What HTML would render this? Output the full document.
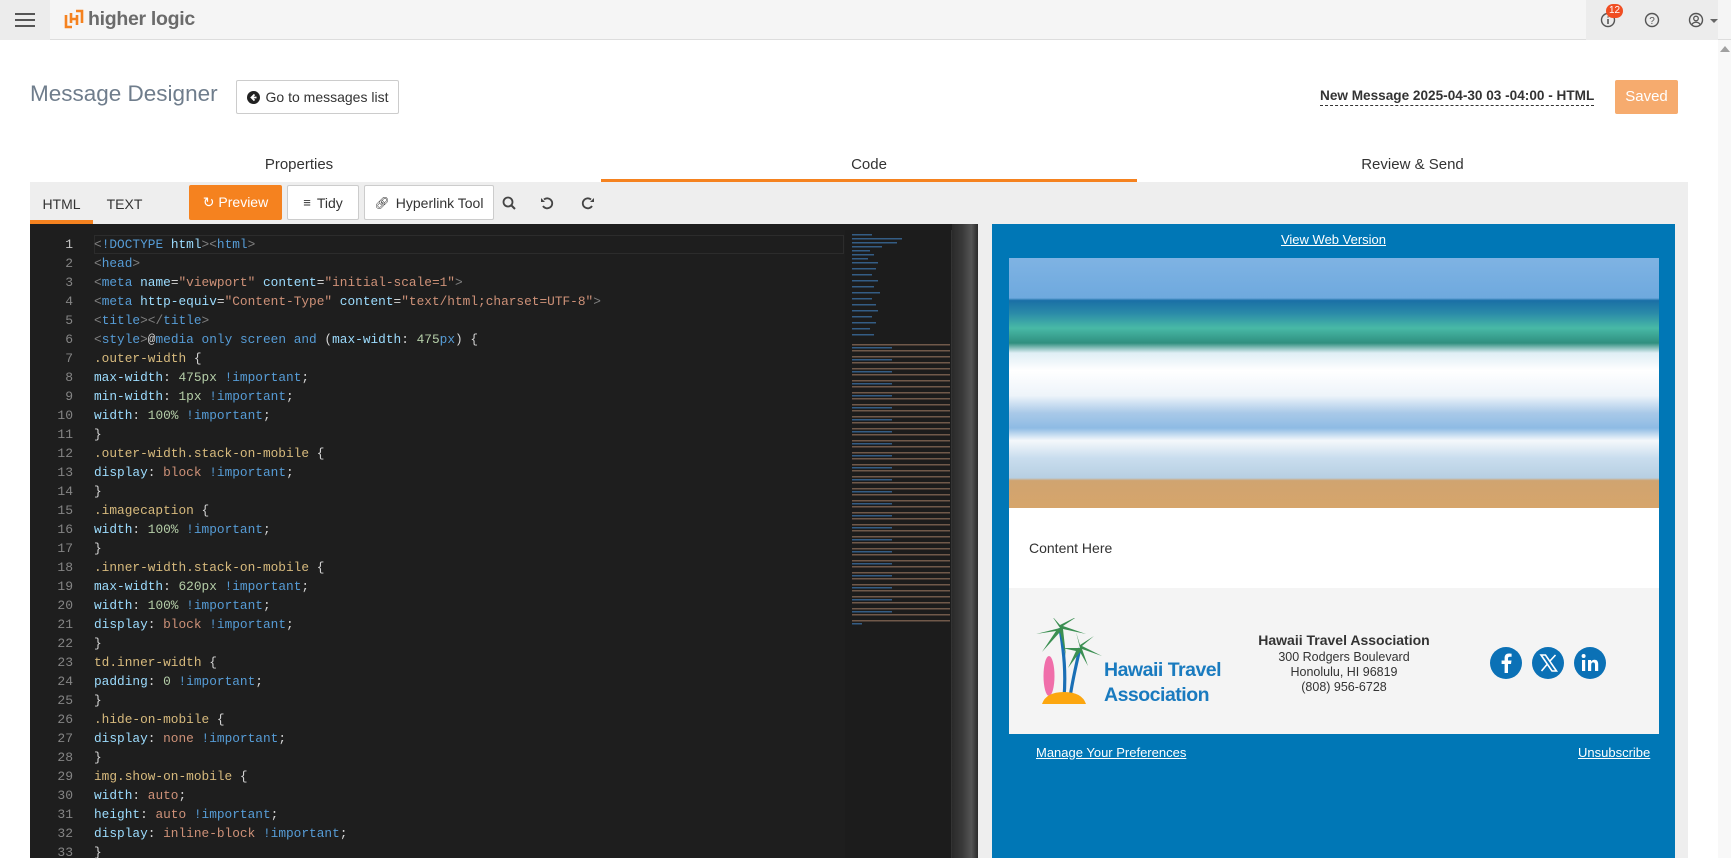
<!DOCTYPE html>
<html><head><meta charset="utf-8">
<style>
*{box-sizing:border-box;margin:0;padding:0}
body{width:1731px;height:858px;overflow:hidden;background:#fff;font-family:"Liberation Sans",sans-serif;position:relative;color:#333}
.abs{position:absolute}
.top{left:0;top:0;width:1731px;height:40px;background:#f5f5f5;border-bottom:1px solid #ddd}
.btn{position:absolute;border:1px solid #ccc;background:#fff;font-size:14px;color:#333;display:flex;align-items:center;justify-content:center;gap:6px;border-radius:2px}
.code{position:absolute;left:94px;top:235px;font-family:"Liberation Mono",monospace;font-size:12.8px;line-height:19px;color:#d4d4d4;white-space:pre}
.nums{position:absolute;left:30px;width:43px;top:235px;font-family:"Liberation Mono",monospace;font-size:13px;line-height:19px;color:#858585;text-align:right;white-space:pre}
.b{color:#808080}.t{color:#569cd6}.a{color:#9cdcfe}.s{color:#ce9178}.n{color:#b5cea8}.sel{color:#d7ba7d}.w{color:#d4d4d4}
.lnk{color:#fff;text-decoration:underline;font-size:13px;position:absolute}
</style></head><body>
<div class="abs top"></div>
<div class="abs" style="left:0;top:0;width:50px;height:40px;background:#ececec"></div>
<div class="abs" style="left:15px;top:13px;width:20px;height:2px;background:#555;box-shadow:0 6px 0 #555,0 12px 0 #555"></div>
<svg class="abs" style="left:64px;top:9px" width="20" height="20" viewBox="0 0 20 20"><path d="M2 6v12h6M18 14V2h-6M7 4v10M13 6v10M7 10h6" stroke="#f5821f" stroke-width="2.6" fill="none"/></svg>
<div class="abs" style="left:88px;top:8px;font-size:19.5px;font-weight:bold;color:#6b6b6b;letter-spacing:-0.3px">higher logic</div>
<div class="abs" style="left:1586px;top:0;width:132px;height:40px;background:#ececec"></div>
<svg class="abs" style="left:1600px;top:12px" width="16" height="16"><circle cx="8" cy="8" r="6.5" stroke="#555" stroke-width="1.4" fill="none"/><path d="M8 7v5M8 4.5v1" stroke="#555" stroke-width="1.6"/></svg>
<div class="abs" style="left:1606px;top:4px;width:17px;height:14px;border-radius:7px;background:#f04e23;color:#fff;font-size:10px;text-align:center;line-height:14px">12</div>
<svg class="abs" style="left:1644px;top:12px" width="16" height="16"><circle cx="8" cy="8" r="6.5" stroke="#555" stroke-width="1.4" fill="none"/><text x="8" y="12" font-size="10" text-anchor="middle" fill="#555" font-family="Liberation Sans">?</text></svg>
<svg class="abs" style="left:1688px;top:12px" width="16" height="16"><circle cx="8" cy="8" r="6.5" stroke="#555" stroke-width="1.4" fill="none"/><circle cx="8" cy="6.5" r="2.3" stroke="#555" stroke-width="1.3" fill="none"/><path d="M3.8 12.5c2-3 6.4-3 8.4 0" stroke="#555" stroke-width="1.3" fill="none"/></svg>
<div class="abs" style="left:1710px;top:19px;border:4px solid transparent;border-top:4px solid #666"></div>
<div class="abs" style="left:1718px;top:40px;width:13px;height:818px;background:#f8f8f8"></div>
<div class="abs" style="left:1720px;top:46px;border:5px solid transparent;border-bottom:6px solid #a0a0a0;border-top:0"></div>

<div class="abs" style="left:30px;top:81px;font-size:22.5px;color:#6f7d8c;font-weight:300">Message Designer</div>
<div class="btn" style="left:236px;top:80px;width:163px;height:34px"><svg width="13" height="13"><circle cx="6.5" cy="6.5" r="6.5" fill="#222"/><path d="M7.5 3.5L4.5 6.5L7.5 9.5M4.5 6.5h5" stroke="#fff" stroke-width="1.8" fill="none"/></svg>Go to messages list</div>
<div class="abs" style="left:1320px;top:88px;font-size:13.6px;font-weight:bold;color:#333;border-bottom:1px dashed #333;padding-bottom:2px">New Message 2025-04-30 03 -04:00 - HTML</div>
<div class="abs" style="left:1615px;top:80px;width:63px;height:34px;background:#f6ab6e;border-radius:2px;color:#fff;font-size:15px;text-align:center;line-height:34px">Saved</div>

<div class="abs" style="left:30px;top:156px;width:538px;text-align:center;font-size:15px;color:#333">Properties</div>
<div class="abs" style="left:601px;top:156px;width:536px;text-align:center;font-size:15px;color:#333">Code</div>
<div class="abs" style="left:1137px;top:156px;width:551px;text-align:center;font-size:15px;color:#333">Review &amp; Send</div>
<div class="abs" style="left:601px;top:179px;width:536px;height:3px;background:#f5821f"></div>

<div class="abs" style="left:30px;top:182px;width:1658px;height:676px;background:#eeeeee"></div>
<div class="abs" style="left:30px;top:196px;width:63px;text-align:center;font-size:14px;color:#333">HTML</div>
<div class="abs" style="left:30px;top:220px;width:63px;height:4px;background:#f5821f"></div>
<div class="abs" style="left:93px;top:196px;width:63px;text-align:center;font-size:14px;color:#333">TEXT</div>
<div class="btn" style="left:189px;top:185px;width:93px;height:35px;background:#f5821f;border-color:#f5821f;color:#fff">&#x21bb; Preview</div>
<div class="btn" style="left:287px;top:185px;width:72px;height:35px"><span style="font-size:13px">&#x2261;</span> Tidy</div>
<div class="btn" style="left:364px;top:185px;width:130px;height:35px"><span style="font-size:12px">&#x1F517;&#xFE0E;</span>Hyperlink Tool</div>
<svg class="abs" style="left:502px;top:196px" width="14" height="14"><circle cx="6" cy="6" r="4.5" stroke="#444" stroke-width="1.8" fill="none"/><path d="M9.5 9.5L13 13" stroke="#444" stroke-width="2"/></svg>
<svg class="abs" style="left:540px;top:196px" width="14" height="14"><path d="M4 3.5A5 5 0 1 1 3 10" stroke="#444" stroke-width="1.8" fill="none"/><path d="M1 2v4h4z" fill="#444"/></svg>
<svg class="abs" style="left:581px;top:196px" width="14" height="14"><path d="M10 3.5A5 5 0 1 0 11 10" stroke="#444" stroke-width="1.8" fill="none"/><path d="M13 2v4H9z" fill="#444"/></svg>

<div class="abs" style="left:30px;top:224px;width:948px;height:634px;background:#1e1e1e"></div>
<div class="abs" style="left:94px;top:235px;width:750px;height:19px;border:1px solid #2c2c2c"></div>
<div class="abs" style="left:845px;top:230px;width:107px;height:628px;background:#1c1c1c;border-right:1px solid #333"></div>
<div class="abs" style="left:952px;top:224px;width:26px;height:634px;background:linear-gradient(90deg,#2a2a2a,#3a3a3a 40%,#555 75%,#2a2a2a)"></div>
<svg class="abs" style="left:850px;top:232px" width="100" height="450">
<g fill="#3a6ea0" opacity=".8">
<rect x="2" y="2" width="20" height="1.5"/><rect x="2" y="6" width="50" height="1.5"/><rect x="2" y="10" width="45" height="1.5"/><rect x="2" y="14" width="30" height="1.5"/>
<rect x="2" y="18" width="18" height="1.5"/><rect x="2" y="22" width="22" height="1.5"/><rect x="2" y="26" width="16" height="1.5"/><rect x="2" y="30" width="26" height="1.5"/>
<rect x="2" y="36" width="24" height="1.5"/><rect x="2" y="42" width="20" height="1.5"/><rect x="2" y="48" width="26" height="1.5"/><rect x="2" y="54" width="22" height="1.5"/>
<rect x="2" y="60" width="28" height="1.5"/><rect x="2" y="66" width="20" height="1.5"/><rect x="2" y="72" width="24" height="1.5"/><rect x="2" y="78" width="26" height="1.5"/>
<rect x="2" y="84" width="20" height="1.5"/><rect x="2" y="90" width="24" height="1.5"/><rect x="2" y="96" width="18" height="1.5"/><rect x="2" y="102" width="22" height="1.5"/>
</g>
<g fill="#7a6050" opacity=".9">
<rect x="2" y="112" width="98" height="1.5"/><rect x="2" y="118" width="98" height="1.5"/><rect x="2" y="124" width="98" height="1.5"/><rect x="2" y="130" width="98" height="1.5"/><rect x="2" y="136" width="98" height="1.5"/><rect x="2" y="142" width="98" height="1.5"/><rect x="2" y="148" width="98" height="1.5"/><rect x="2" y="154" width="98" height="1.5"/><rect x="2" y="160" width="98" height="1.5"/><rect x="2" y="166" width="98" height="1.5"/><rect x="2" y="172" width="98" height="1.5"/><rect x="2" y="178" width="98" height="1.5"/><rect x="2" y="184" width="98" height="1.5"/><rect x="2" y="190" width="98" height="1.5"/><rect x="2" y="196" width="98" height="1.5"/><rect x="2" y="202" width="98" height="1.5"/><rect x="2" y="208" width="98" height="1.5"/><rect x="2" y="214" width="98" height="1.5"/><rect x="2" y="220" width="98" height="1.5"/><rect x="2" y="226" width="98" height="1.5"/><rect x="2" y="232" width="98" height="1.5"/><rect x="2" y="238" width="98" height="1.5"/><rect x="2" y="244" width="98" height="1.5"/><rect x="2" y="250" width="98" height="1.5"/><rect x="2" y="256" width="98" height="1.5"/><rect x="2" y="262" width="98" height="1.5"/><rect x="2" y="268" width="98" height="1.5"/><rect x="2" y="274" width="98" height="1.5"/><rect x="2" y="280" width="98" height="1.5"/><rect x="2" y="286" width="98" height="1.5"/><rect x="2" y="292" width="98" height="1.5"/><rect x="2" y="298" width="98" height="1.5"/><rect x="2" y="304" width="98" height="1.5"/><rect x="2" y="310" width="98" height="1.5"/><rect x="2" y="316" width="98" height="1.5"/><rect x="2" y="322" width="98" height="1.5"/><rect x="2" y="328" width="98" height="1.5"/><rect x="2" y="334" width="98" height="1.5"/><rect x="2" y="340" width="98" height="1.5"/><rect x="2" y="346" width="98" height="1.5"/><rect x="2" y="352" width="98" height="1.5"/><rect x="2" y="358" width="98" height="1.5"/><rect x="2" y="364" width="98" height="1.5"/><rect x="2" y="370" width="98" height="1.5"/><rect x="2" y="376" width="98" height="1.5"/><rect x="2" y="382" width="98" height="1.5"/><rect x="2" y="388" width="98" height="1.5"/>
</g>
<g fill="#3a6ea0" opacity=".8">
<rect x="2" y="115" width="40" height="1.5"/><rect x="2" y="127" width="40" height="1.5"/><rect x="2" y="139" width="40" height="1.5"/><rect x="2" y="151" width="40" height="1.5"/><rect x="2" y="163" width="40" height="1.5"/><rect x="2" y="175" width="40" height="1.5"/><rect x="2" y="187" width="40" height="1.5"/><rect x="2" y="199" width="40" height="1.5"/><rect x="2" y="211" width="40" height="1.5"/><rect x="2" y="223" width="40" height="1.5"/><rect x="2" y="235" width="40" height="1.5"/><rect x="2" y="247" width="40" height="1.5"/><rect x="2" y="259" width="40" height="1.5"/><rect x="2" y="271" width="40" height="1.5"/><rect x="2" y="283" width="40" height="1.5"/><rect x="2" y="295" width="40" height="1.5"/><rect x="2" y="307" width="40" height="1.5"/><rect x="2" y="319" width="40" height="1.5"/><rect x="2" y="331" width="40" height="1.5"/><rect x="2" y="343" width="40" height="1.5"/><rect x="2" y="355" width="40" height="1.5"/><rect x="2" y="367" width="40" height="1.5"/><rect x="2" y="379" width="40" height="1.5"/><rect x="2" y="391" width="10" height="1.5"/>
</g></svg>

<div class="nums"><span style="color:#c6c6c6">1</span>
2
3
4
5
6
7
8
9
10
11
12
13
14
15
16
17
18
19
20
21
22
23
24
25
26
27
28
29
30
31
32
33</div>
<div class="code"><span class="b">&lt;</span><span class="t">!DOCTYPE</span> <span class="a">html</span><span class="b">&gt;&lt;</span><span class="t">html</span><span class="b">&gt;</span>
<span class="b">&lt;</span><span class="t">head</span><span class="b">&gt;</span>
<span class="b">&lt;</span><span class="t">meta</span> <span class="a">name</span>=<span class="s">"viewport"</span> <span class="a">content</span>=<span class="s">"initial-scale=1"</span><span class="b">&gt;</span>
<span class="b">&lt;</span><span class="t">meta</span> <span class="a">http-equiv</span>=<span class="s">"Content-Type"</span> <span class="a">content</span>=<span class="s">"text/html;charset=UTF-8"</span><span class="b">&gt;</span>
<span class="b">&lt;</span><span class="t">title</span><span class="b">&gt;&lt;/</span><span class="t">title</span><span class="b">&gt;</span>
<span class="b">&lt;</span><span class="t">style</span><span class="b">&gt;</span><span class="w">@</span><span class="t">media only screen and</span> (<span class="a">max-width</span>: <span class="n">475</span><span class="t">px</span>) {
<span class="sel">.outer-width</span> {
<span class="a">max-width</span>: <span class="n">475px</span> <span class="t">!important</span>;
<span class="a">min-width</span>: <span class="n">1px</span> <span class="t">!important</span>;
<span class="a">width</span>: <span class="n">100%</span> <span class="t">!important</span>;
}
<span class="sel">.outer-width.stack-on-mobile</span> {
<span class="a">display</span>: <span class="s">block</span> <span class="t">!important</span>;
}
<span class="sel">.imagecaption</span> {
<span class="a">width</span>: <span class="n">100%</span> <span class="t">!important</span>;
}
<span class="sel">.inner-width.stack-on-mobile</span> {
<span class="a">max-width</span>: <span class="n">620px</span> <span class="t">!important</span>;
<span class="a">width</span>: <span class="n">100%</span> <span class="t">!important</span>;
<span class="a">display</span>: <span class="s">block</span> <span class="t">!important</span>;
}
<span class="sel">td.inner-width</span> {
<span class="a">padding</span>: <span class="n">0</span> <span class="t">!important</span>;
}
<span class="sel">.hide-on-mobile</span> {
<span class="a">display</span>: <span class="s">none</span> <span class="t">!important</span>;
}
<span class="sel">img.show-on-mobile</span> {
<span class="a">width</span>: <span class="s">auto</span>;
<span class="a">height</span>: <span class="s">auto</span> <span class="t">!important</span>;
<span class="a">display</span>: <span class="s">inline-block</span> <span class="t">!important</span>;
}</div>

<div class="abs" style="left:992px;top:224px;width:683px;height:634px;background:#0077b6"></div>
<a class="lnk" style="left:992px;width:683px;text-align:center;top:232px">View Web Version</a>
<div class="abs" style="left:1009px;top:258px;width:650px;height:250px;background:linear-gradient(180deg,#7fb3e3 0,#6ea9de 16%,#1a6fa6 17%,#2a8aa8 22%,#48b9a6 28%,#2f8f7f 34%,#dfeef5 38%,#ffffff 45%,#eef4fa 55%,#a9c9e8 62%,#8ebbe4 68%,#f4f8fb 73%,#c9ddee 80%,#b7cfe2 88%,#d0a470 89%,#d6a56b 100%)"></div>
<div class="abs" style="left:1009px;top:508px;width:650px;height:80px;background:#fff"></div>
<div class="abs" style="left:1029px;top:540px;font-size:14px;color:#333">Content Here</div>
<div class="abs" style="left:1009px;top:588px;width:650px;height:146px;background:#f4f4f4"></div>
<svg class="abs" style="left:1036px;top:618px" width="72" height="86" viewBox="0 0 72 86">
<ellipse cx="13" cy="58" rx="5.5" ry="20" fill="#f06eaa"/>
<path d="M24 10C28 35 30 55 28 80M44 30C40 48 36 64 34 80" stroke="#1a6fb5" stroke-width="3.2" fill="none"/>
<g fill="#3b8f52"><path d="M24 10L0 16L20 13L6 34L24 14L30 38L27 11L50 16L27 8L42 -2L24 7L16 -2Z"/><path d="M44 30L26 30L40 33L32 50L44 34L52 48L46 31L66 38L46 28L58 18L44 27L40 14Z"/></g>
<path d="M6 86Q10 74 28 74Q46 74 50 86Z" fill="#fca60f"/>
</svg>
<div class="abs" style="left:1104px;top:658px;font-size:19.5px;font-weight:bold;color:#1a7bbf;line-height:25px;letter-spacing:-0.5px">Hawaii Travel<br>Association</div>
<div class="abs" style="left:1234px;top:632px;width:220px;text-align:center;font-size:14px;font-weight:bold;color:#333">Hawaii Travel Association</div>
<div class="abs" style="left:1234px;top:650px;width:220px;text-align:center;font-size:12.5px;color:#333;line-height:15px">300 Rodgers Boulevard<br>Honolulu, HI 96819<br>(808) 956-6728</div>
<svg class="abs" style="left:1489px;top:646px" width="118" height="34">
<circle cx="17" cy="17" r="16" fill="#0b71b6"/><path d="M19 27V18h3l.5-3.5H19v-2c0-1 .4-1.7 1.8-1.7h1.8V7.7c-.4 0-1.5-.2-2.7-.2-2.6 0-4.3 1.6-4.3 4.5v2.5h-3V18h3v9z" fill="#fff"/>
<circle cx="59" cy="17" r="16" fill="#0b71b6"/><path d="M52 9h4.5l11 16h-4.5zM52.5 25L58 18.5M60.5 15.5L66.5 9" stroke="#fff" stroke-width="1.6" fill="none"/>
<circle cx="101" cy="17" r="16" fill="#0b71b6"/><rect x="93" y="14" width="3.2" height="11" fill="#fff"/><circle cx="94.6" cy="10" r="2" fill="#fff"/><path d="M99 25V14h3v1.6c.8-1.3 2-1.9 3.5-1.9 2.5 0 3.7 1.6 3.7 4.6V25h-3.2v-6c0-1.7-.5-2.6-1.8-2.6s-2 .9-2 2.6v6z" fill="#fff"/>
</svg>
<a class="lnk" style="left:1036px;top:745px">Manage Your Preferences</a>
<a class="lnk" style="left:1578px;top:745px;width:71px;text-align:right">Unsubscribe</a>
</body></html>
